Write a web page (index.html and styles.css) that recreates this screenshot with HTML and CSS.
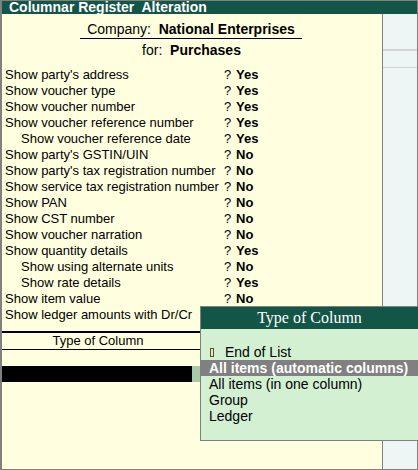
FILE: index.html
```html
<!DOCTYPE html>
<html>
<head>
<meta charset="utf-8">
<link rel="stylesheet" href="styles.css">
</head>
<body>
<div class="window">
  <div class="titlebar">Columnar Register&nbsp; Alteration</div>
  <div class="content">
    <div class="main">
      <div class="head">
        <div class="company">Company:&nbsp; <b>National Enterprises</b></div>
        <div class="for">for:&nbsp; <b>Purchases</b></div>
      </div>
      <div class="rows">
        <div class="row"><span class="lbl">Show party's address</span><span class="q">?</span><b>Yes</b></div>
        <div class="row"><span class="lbl">Show voucher type</span><span class="q">?</span><b>Yes</b></div>
        <div class="row"><span class="lbl">Show voucher number</span><span class="q">?</span><b>Yes</b></div>
        <div class="row"><span class="lbl">Show voucher reference number</span><span class="q">?</span><b>Yes</b></div>
        <div class="row"><span class="lbl sub">Show voucher reference date</span><span class="q">?</span><b>Yes</b></div>
        <div class="row"><span class="lbl">Show party's GSTIN/UIN</span><span class="q">?</span><b>No</b></div>
        <div class="row"><span class="lbl">Show party's tax registration number</span><span class="q">?</span><b>No</b></div>
        <div class="row"><span class="lbl">Show service tax registration number</span><span class="q">?</span><b>No</b></div>
        <div class="row"><span class="lbl">Show PAN</span><span class="q">?</span><b>No</b></div>
        <div class="row"><span class="lbl">Show CST number</span><span class="q">?</span><b>No</b></div>
        <div class="row"><span class="lbl">Show voucher narration</span><span class="q">?</span><b>No</b></div>
        <div class="row"><span class="lbl">Show quantity details</span><span class="q">?</span><b>Yes</b></div>
        <div class="row"><span class="lbl sub">Show using alternate units</span><span class="q">?</span><b>No</b></div>
        <div class="row"><span class="lbl sub">Show rate details</span><span class="q">?</span><b>Yes</b></div>
        <div class="row"><span class="lbl">Show item value</span><span class="q">?</span><b>No</b></div>
        <div class="row"><span class="lbl">Show ledger amounts with Dr/Cr</span></div>
      </div>
      <div class="coltype">
        <div class="colhead">Type of Column</div>
        <div class="colinput"><span class="blackbar"></span><span class="greenbit"></span></div>
      </div>
    </div>
    <div class="side">
      <div class="side-a"></div>
      <div class="side-b"></div>
    </div>
  </div>
  <div class="popup">
    <div class="ptitle">Type of Column</div>
    <div class="pbody">
      <div class="item end"><span class="mark"></span>End of List</div>
      <div class="item sel">All items (automatic columns)</div>
      <div class="item">All items (in one column)</div>
      <div class="item">Group</div>
      <div class="item">Ledger</div>
    </div>
  </div>
</div>
</body>
</html>
```

FILE: styles.css
```css
* { box-sizing: border-box; }
html, body { margin: 0; padding: 0; }
body {
  font-family: "Liberation Sans", Arial, sans-serif;
  font-size: 13px;
  color: #000;
  background: #fff;
}
.window {
  position: relative;
  width: 418px;
  height: 470px;
  border: 1px solid #808080;
  border-left-width: 2px;
  display: flex;
  flex-direction: column;
  background: #ffffe0;
}
.titlebar {
  height: 13px;
  line-height: 13px;
  background: #135547;
  color: #fff;
  font-weight: bold;
  font-size: 14px;
  padding-left: 7px;
  white-space: pre;
}
.content {
  flex: 1;
  display: flex;
}
.main {
  width: 381px;
  background: #ffffe0;
  display: flex;
  flex-direction: column;
  border-right: 1px solid #808080;
}
.head {
  display: flex;
  flex-direction: column;
  align-items: center;
  padding-top: 7px;
  padding-right: 2px;
  height: 53px;
}
.company {
  font-size: 14px;
  line-height: 17px;
  padding: 0 5px 0 5px;
  border-bottom: 1px solid #000;
  width: 222px;
  text-align: center;
}
.for {
  font-size: 14px;
  line-height: 18px;
  margin-top: 2px;
  padding-left: 1px;
}
.rows {
  display: flex;
  flex-direction: column;
  padding-left: 3px;
}
.row {
  height: 16px;
  line-height: 16px;
  display: flex;
  white-space: nowrap;
}
.lbl { width: 219px; }
.lbl.sub { padding-left: 16px; }
.q { width: 12px; }
.row b { font-weight: bold; }
.coltype {
  width: 198px;
  margin-top: 8px;
}
.colhead {
  border-top: 2px solid #000;
  border-bottom: 1px solid #000;
  height: 19px;
  line-height: 15px;
  text-align: center;
  padding-right: 6px;
}
.colinput {
  margin-top: 16px;
  height: 16px;
  display: flex;
}
.blackbar { width: 190px; background: #000; }
.greenbit { width: 8px; background: #a9c8a9; }
.side {
  flex: 1;
  background: #edf5f5;
  display: flex;
  flex-direction: column;
}
.side-a {
  height: 37px;
  border-bottom: 2px solid #d4d6d6;
}
.side-b {
  height: 17px;
  border-bottom: 1px solid #d4d6d6;
}
.popup {
  position: absolute;
  left: 198px;
  top: 305px;
  width: 218px;
  height: 135px;
  border: 1px solid #808080;
  border-right: 0;
  background: #d3f0d3;
}
.ptitle {
  height: 22px;
  line-height: 22px;
  background: #135547;
  color: #fff;
  font-family: "Liberation Serif", "Times New Roman", serif;
  font-size: 16px;
  text-align: center;
}
.pbody {
  padding-top: 15px;
}
.item {
  height: 16px;
  line-height: 16px;
  padding-left: 8px;
  font-size: 14px;
  white-space: nowrap;
}
.item.end { display: flex; align-items: center; padding-left: 9px; }
.mark {
  display: inline-block;
  width: 4px;
  height: 9px;
  border: 1px solid #6a4a20;
  margin-right: 11px;
}
.item.sel {
  background: #808080;
  color: #fff;
  font-weight: bold;
}
```
